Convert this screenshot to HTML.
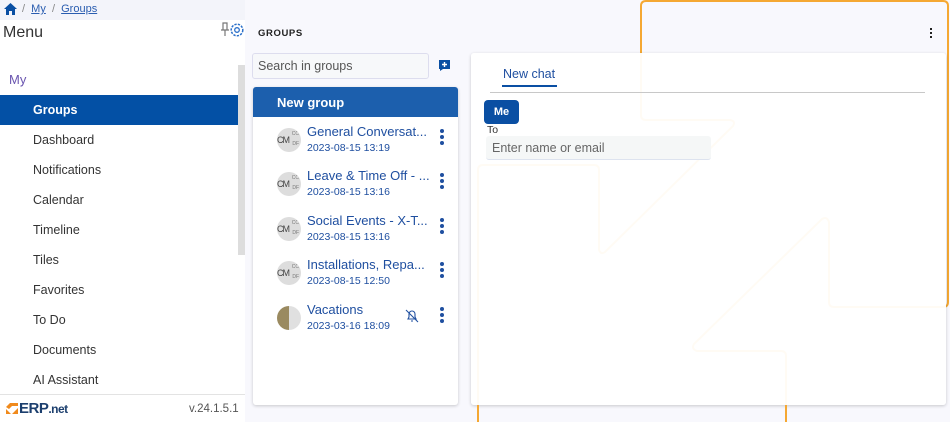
<!DOCTYPE html>
<html><head><meta charset="utf-8"><style>
*{box-sizing:border-box;margin:0;padding:0}
body{width:950px;height:422px;overflow:hidden;background:#f8f8fd;font-family:"Liberation Sans",sans-serif;position:relative;color:#333}
.abs{position:absolute}
.menu-item{position:absolute;left:33px;font-size:12.5px;color:#333}
.it{position:absolute;left:0;width:205px;height:44px}
.av{position:absolute;left:24px;top:4px;width:24px;height:24px;border-radius:50%;background:#ddd;overflow:hidden;font-size:9px;color:#444;line-height:24px;letter-spacing:-1px}
.av b{position:absolute;right:2px;font-size:5px;font-weight:normal;color:#777;letter-spacing:0}
.tt{position:absolute;left:54px;top:0;font-size:13px;color:#1f4fa0;white-space:nowrap}
.dt{position:absolute;left:54px;top:18px;font-size:10.5px;color:#1f4fa0}
.kb{position:absolute;left:187px;top:5px;width:4px}
.kb i{display:block;width:4px;height:4px;border-radius:50%;background:#1f4fa0;margin-bottom:2px}
</style></head><body>
<svg class="abs" style="left:0;top:0" width="950" height="422"><path d="M478,422 V170 q0,-5 5,-5 H594 q5,0 5,5 V250 q2,5 6,2 L733,126 q3,-5 -3,-6 H646 q-5,0 -5,-5 V6 q0,-5 5,-5 H943 q5,0 5,5 V302 q0,5 -5,5 H834 q-5,0 -5,-5 V222 q-2,-6 -7,-3 L694,344 q-3,5 3,7 H781 q5,0 5,5 V422" fill="none" stroke="#f5a833" stroke-width="2"/></svg>

<div class="abs" style="left:0;top:0;width:245px;height:20px;background:#f3f4fa"></div>
<svg class="abs" style="left:4px;top:3px" width="13" height="12" viewBox="0 0 13 12"><path d="M6.5 0 L13 6 H11 V12 H8 V8 H5 V12 H2 V6 H0 Z" fill="#0a4fa3"/></svg>
<div class="abs" style="left:22px;top:3px;font-size:11px;color:#888">/ &nbsp;<span style="color:#2a5db0;text-decoration:underline">My</span> &nbsp;/ &nbsp;<span style="color:#2a5db0;text-decoration:underline">Groups</span></div>

<div class="abs" style="left:0;top:20px;width:245px;height:374px;background:#fff"></div>
<div class="abs" style="left:238px;top:65px;width:7px;height:190px;background:#ddd"></div>
<div class="abs" style="left:3px;top:24px;font-size:16px;color:#333">Menu</div>
<svg class="abs" style="left:218px;top:22px" width="28" height="17" viewBox="0 0 28 17"><path d="M5 1 H9 V8 H5 Z M7 8 V14 M3 8 H11" stroke="#777" fill="none" stroke-width="1.2"/><circle cx="19" cy="8" r="2.3" fill="none" stroke="#2a6fc9" stroke-width="1.3"/><circle cx="19" cy="8" r="5.8" fill="none" stroke="#2a6fc9" stroke-width="1.5" stroke-dasharray="2.3 1.2"/></svg>
<div class="abs" style="left:9px;top:72px;font-size:13px;color:#6a55b0">My</div>
<div class="abs" style="left:0;top:95px;width:238px;height:30px;background:#0350a5"></div>
<div class="menu-item" style="top:103px;color:#fff;font-weight:bold">Groups</div>
<div class="menu-item" style="top:133px">Dashboard</div>
<div class="menu-item" style="top:163px">Notifications</div>
<div class="menu-item" style="top:193px">Calendar</div>
<div class="menu-item" style="top:223px">Timeline</div>
<div class="menu-item" style="top:253px">Tiles</div>
<div class="menu-item" style="top:283px">Favorites</div>
<div class="menu-item" style="top:313px">To Do</div>
<div class="menu-item" style="top:343px">Documents</div>
<div class="menu-item" style="top:373px">AI Assistant</div>
<div class="abs" style="left:0;top:394px;width:245px;height:28px;background:#fff;border-top:1px solid #e3e3e3"></div>
<svg class="abs" style="left:6px;top:403px" width="12" height="11"><path d="M0 4 L4 0 H12 V3 H6 L3 6Z M0 11 V6 L5 11 Z M6 11 L12 5 V11Z" fill="#f08a1c"/></svg>
<div class="abs" style="left:19px;top:400px;font-size:15px;font-weight:bold;color:#1c3f6e;letter-spacing:-0.5px">ERP<span style="font-size:12px">.net</span></div>
<div class="abs" style="left:189px;top:403px;font-size:11.5px;color:#555">v.24.1.5.1</div>

<div class="abs" style="left:258px;top:28px;font-size:9.5px;font-weight:bold;letter-spacing:0.6px;color:#222">GROUPS</div>
<div class="abs" style="left:252px;top:53px;width:177px;height:26px;border:1px solid #dde;border-radius:3px;background:#f7f8fa;font-size:12.5px;color:#555;padding:5px 0 0 5px">Search in groups</div>
<svg class="abs" style="left:438px;top:59px" width="13" height="13"><path d="M1 1 H12 V10 H5 L2 12 V10 H1Z" fill="#0a4fa3"/><path d="M6.5 3 V8 M4 5.5 H9" stroke="#fff" stroke-width="1.4"/></svg>
<div class="abs" style="left:253px;top:87px;width:205px;height:318px;background:#fff;border-radius:3px;box-shadow:0 1px 3px rgba(0,0,0,.2)">
 <div style="height:30px;background:#1c5fad;color:#fff;font-size:13px;font-weight:bold;padding:8px 0 0 24px;border-radius:3px 3px 0 0">New group</div>
 <div class="it" style="top:37px"><div class="av">CM<b style="top:-6px">CC</b><b style="top:4px">DF</b></div><div class="tt">General Conversat...</div><div class="dt">2023-08-15 13:19</div><div class="kb"><i></i><i></i><i></i></div></div>
 <div class="it" style="top:81px"><div class="av">CM<b style="top:-6px">CC</b><b style="top:4px">DF</b></div><div class="tt">Leave &amp; Time Off - ...</div><div class="dt">2023-08-15 13:16</div><div class="kb"><i></i><i></i><i></i></div></div>
 <div class="it" style="top:126px"><div class="av">CM<b style="top:-6px">CC</b><b style="top:4px">DF</b></div><div class="tt">Social Events - X-T...</div><div class="dt">2023-08-15 13:16</div><div class="kb"><i></i><i></i><i></i></div></div>
 <div class="it" style="top:170px"><div class="av">CM<b style="top:-6px">CC</b><b style="top:4px">DF</b></div><div class="tt">Installations, Repa...</div><div class="dt">2023-08-15 12:50</div><div class="kb"><i></i><i></i><i></i></div></div>
 <div class="it" style="top:215px"><div class="av" style="background:linear-gradient(90deg,#9a8a60 50%,#e0e0e0 50%)"></div><div class="tt">Vacations</div><div class="dt">2023-03-16 18:09</div>
  <svg class="abs" style="left:152px;top:7px" width="14" height="14"><path d="M3 10 H11 L10 8 V5 A3 3 0 0 0 4 5 V8Z M6 12 H8" stroke="#1f4fa0" fill="none" stroke-width="1.1"/><path d="M1 1 L13 13" stroke="#1f4fa0" stroke-width="1.1"/></svg>
  <div class="kb"><i></i><i></i><i></i></div></div>
</div>

<div class="abs" style="left:930px;top:28px;width:2px"><i style="display:block;width:2px;height:2px;background:#222;margin-bottom:2px"></i><i style="display:block;width:2px;height:2px;background:#222;margin-bottom:2px"></i><i style="display:block;width:2px;height:2px;background:#222"></i></div>

<div class="abs" style="left:471px;top:53px;width:475px;height:352px;background:rgba(255,255,255,0.95);border-radius:3px;box-shadow:0 1px 3px rgba(0,0,0,.2)">
 <div class="abs" style="left:32px;top:14px;font-size:12.5px;color:#1f4fa0">New chat</div>
 <div class="abs" style="left:31px;top:32px;width:55px;height:2px;background:#0a4fa3"></div>
 <div class="abs" style="left:19px;top:39px;width:435px;height:1px;background:#c8c8c8"></div>
 <div class="abs" style="left:13px;top:47px;width:35px;height:24px;background:#0a4fa3;border-radius:4px;color:#fff;font-size:11px;font-weight:bold;text-align:center;line-height:24px">Me</div>
 <div class="abs" style="left:16px;top:71px;font-size:10.5px;color:#333">To</div>
 <div class="abs" style="left:15px;top:83px;width:225px;height:24px;background:#f5f7f7;border-bottom:1px solid #dde3ef;border-radius:3px;font-size:12.5px;color:#666;padding:5px 0 0 6px">Enter name or email</div>
</div>
<svg class="abs" style="left:0;top:0;pointer-events:none" width="950" height="422"><path d="M478,405 V422 M786,405 V422" stroke="#f5a833" stroke-width="2"/></svg>
</body></html>
